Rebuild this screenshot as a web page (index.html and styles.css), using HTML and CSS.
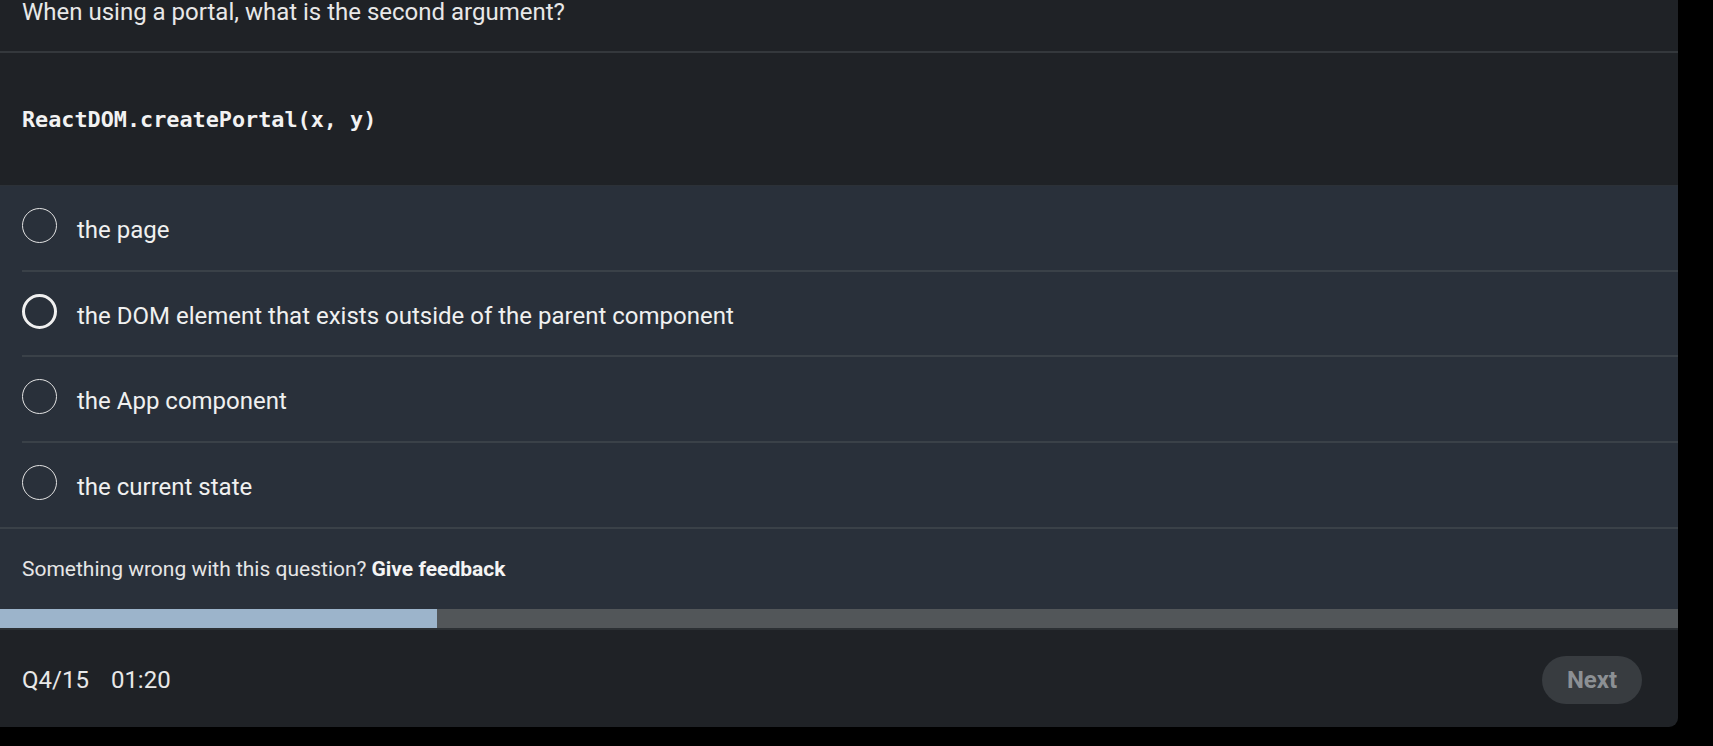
FILE: index.html
```html
<!DOCTYPE html>
<html lang="en">
<head>
<meta charset="utf-8">
<title>Quiz</title>
<link rel="stylesheet" href="styles.css">
</head>
<body>
<main class="card">
  <header class="question">When using a portal, what is the second argument?</header>
  <section class="code"><code>ReactDOM.createPortal(x, y)</code></section>
  <ul class="options">
    <li class="option"><span class="radio"></span><span class="label">the page</span></li>
    <li class="option focused"><span class="radio"></span><span class="label">the DOM element that exists outside of the parent component</span></li>
    <li class="option"><span class="radio"></span><span class="label">the App component</span></li>
    <li class="option"><span class="radio"></span><span class="label">the current state</span></li>
  </ul>
  <section class="feedback">Something wrong with this question? <strong>Give feedback</strong></section>
  <div class="progress"><div class="fill" style="width:26.04%"></div></div>
  <footer class="footer">
    <div class="meta"><span>Q4/15</span><span>01:20</span></div>
    <button class="next" type="button">Next</button>
  </footer>
</main>
</body>
</html>
```

FILE: styles.css
```css
* { box-sizing: border-box; }
html, body { margin: 0; padding: 0; background: #000; }
body { font-family: Roboto, "Open Sans", sans-serif; color: #ececec; }

.card {
  width: 1678px;
  height: 727px;
  background: #1f2226;
  border-bottom-right-radius: 9px;
  overflow: hidden;
  display: flex;
  flex-direction: column;
}

.question {
  flex: none;
  height: 53px;
  padding: 1px 22px 0;
  font-size: 24px;
  line-height: 22px;
  border-bottom: 2px solid #34383c;
  color: #e8e8e8;
}

.code {
  flex: none;
  height: 133px;
  padding: 0 22px;
  display: flex;
  align-items: center;
  border-bottom: 1px solid #2c3137;
}
.code code {
  font-family: "DejaVu Sans Mono", "Liberation Mono", monospace;
  font-weight: 700;
  font-size: 21.8px;
  color: #f2f2f2;
}

.options {
  flex: none;
  list-style: none;
  margin: 0;
  padding: 0 0 0 22px;
  background: #29303a;
}
.option {
  display: flex;
  align-items: flex-start;
  gap: 20px;
  height: 85.5px;
  padding-top: 22px;
  border-bottom: 2px solid #3a4148;
}
.option:last-child { border-bottom: none; height: 84.5px; }
.radio {
  flex: none;
  width: 35px;
  height: 35px;
  border-radius: 50%;
  border: 1.5px solid #e2e2e2;
}
.option.focused .radio { border-width: 3px; border-color: #f0f0f0; }
.label {
  font-size: 24px;
  line-height: 36px;
  margin-top: 4px;
  color: #f0f0f0;
}

.feedback {
  flex: none;
  height: 82px;
  padding: 0 22px;
  display: flex;
  align-items: center;
  gap: 5px;
  background: #29303a;
  border-top: 2px solid #3a4148;
  font-size: 21px;
  color: #e6e6e6;
}
.feedback strong { font-weight: 700; color: #f4f4f4; }

.progress {
  flex: none;
  height: 21px;
  background: #525659;
  border-bottom: 2px solid #2c3034;
}
.progress .fill { height: 100%; background: #9cb4cb; }

.footer {
  flex: 1;
  display: flex;
  align-items: center;
  justify-content: space-between;
  padding: 2px 36px 0 22px;
}
.meta { display: flex; gap: 22px; font-size: 24px; color: #e8e8e8; }
.next {
  width: 100px;
  height: 48px;
  border: none;
  border-radius: 24px;
  background: #383c40;
  color: #8c9094;
  font-family: inherit;
  font-weight: 700;
  font-size: 24px;
}
```
